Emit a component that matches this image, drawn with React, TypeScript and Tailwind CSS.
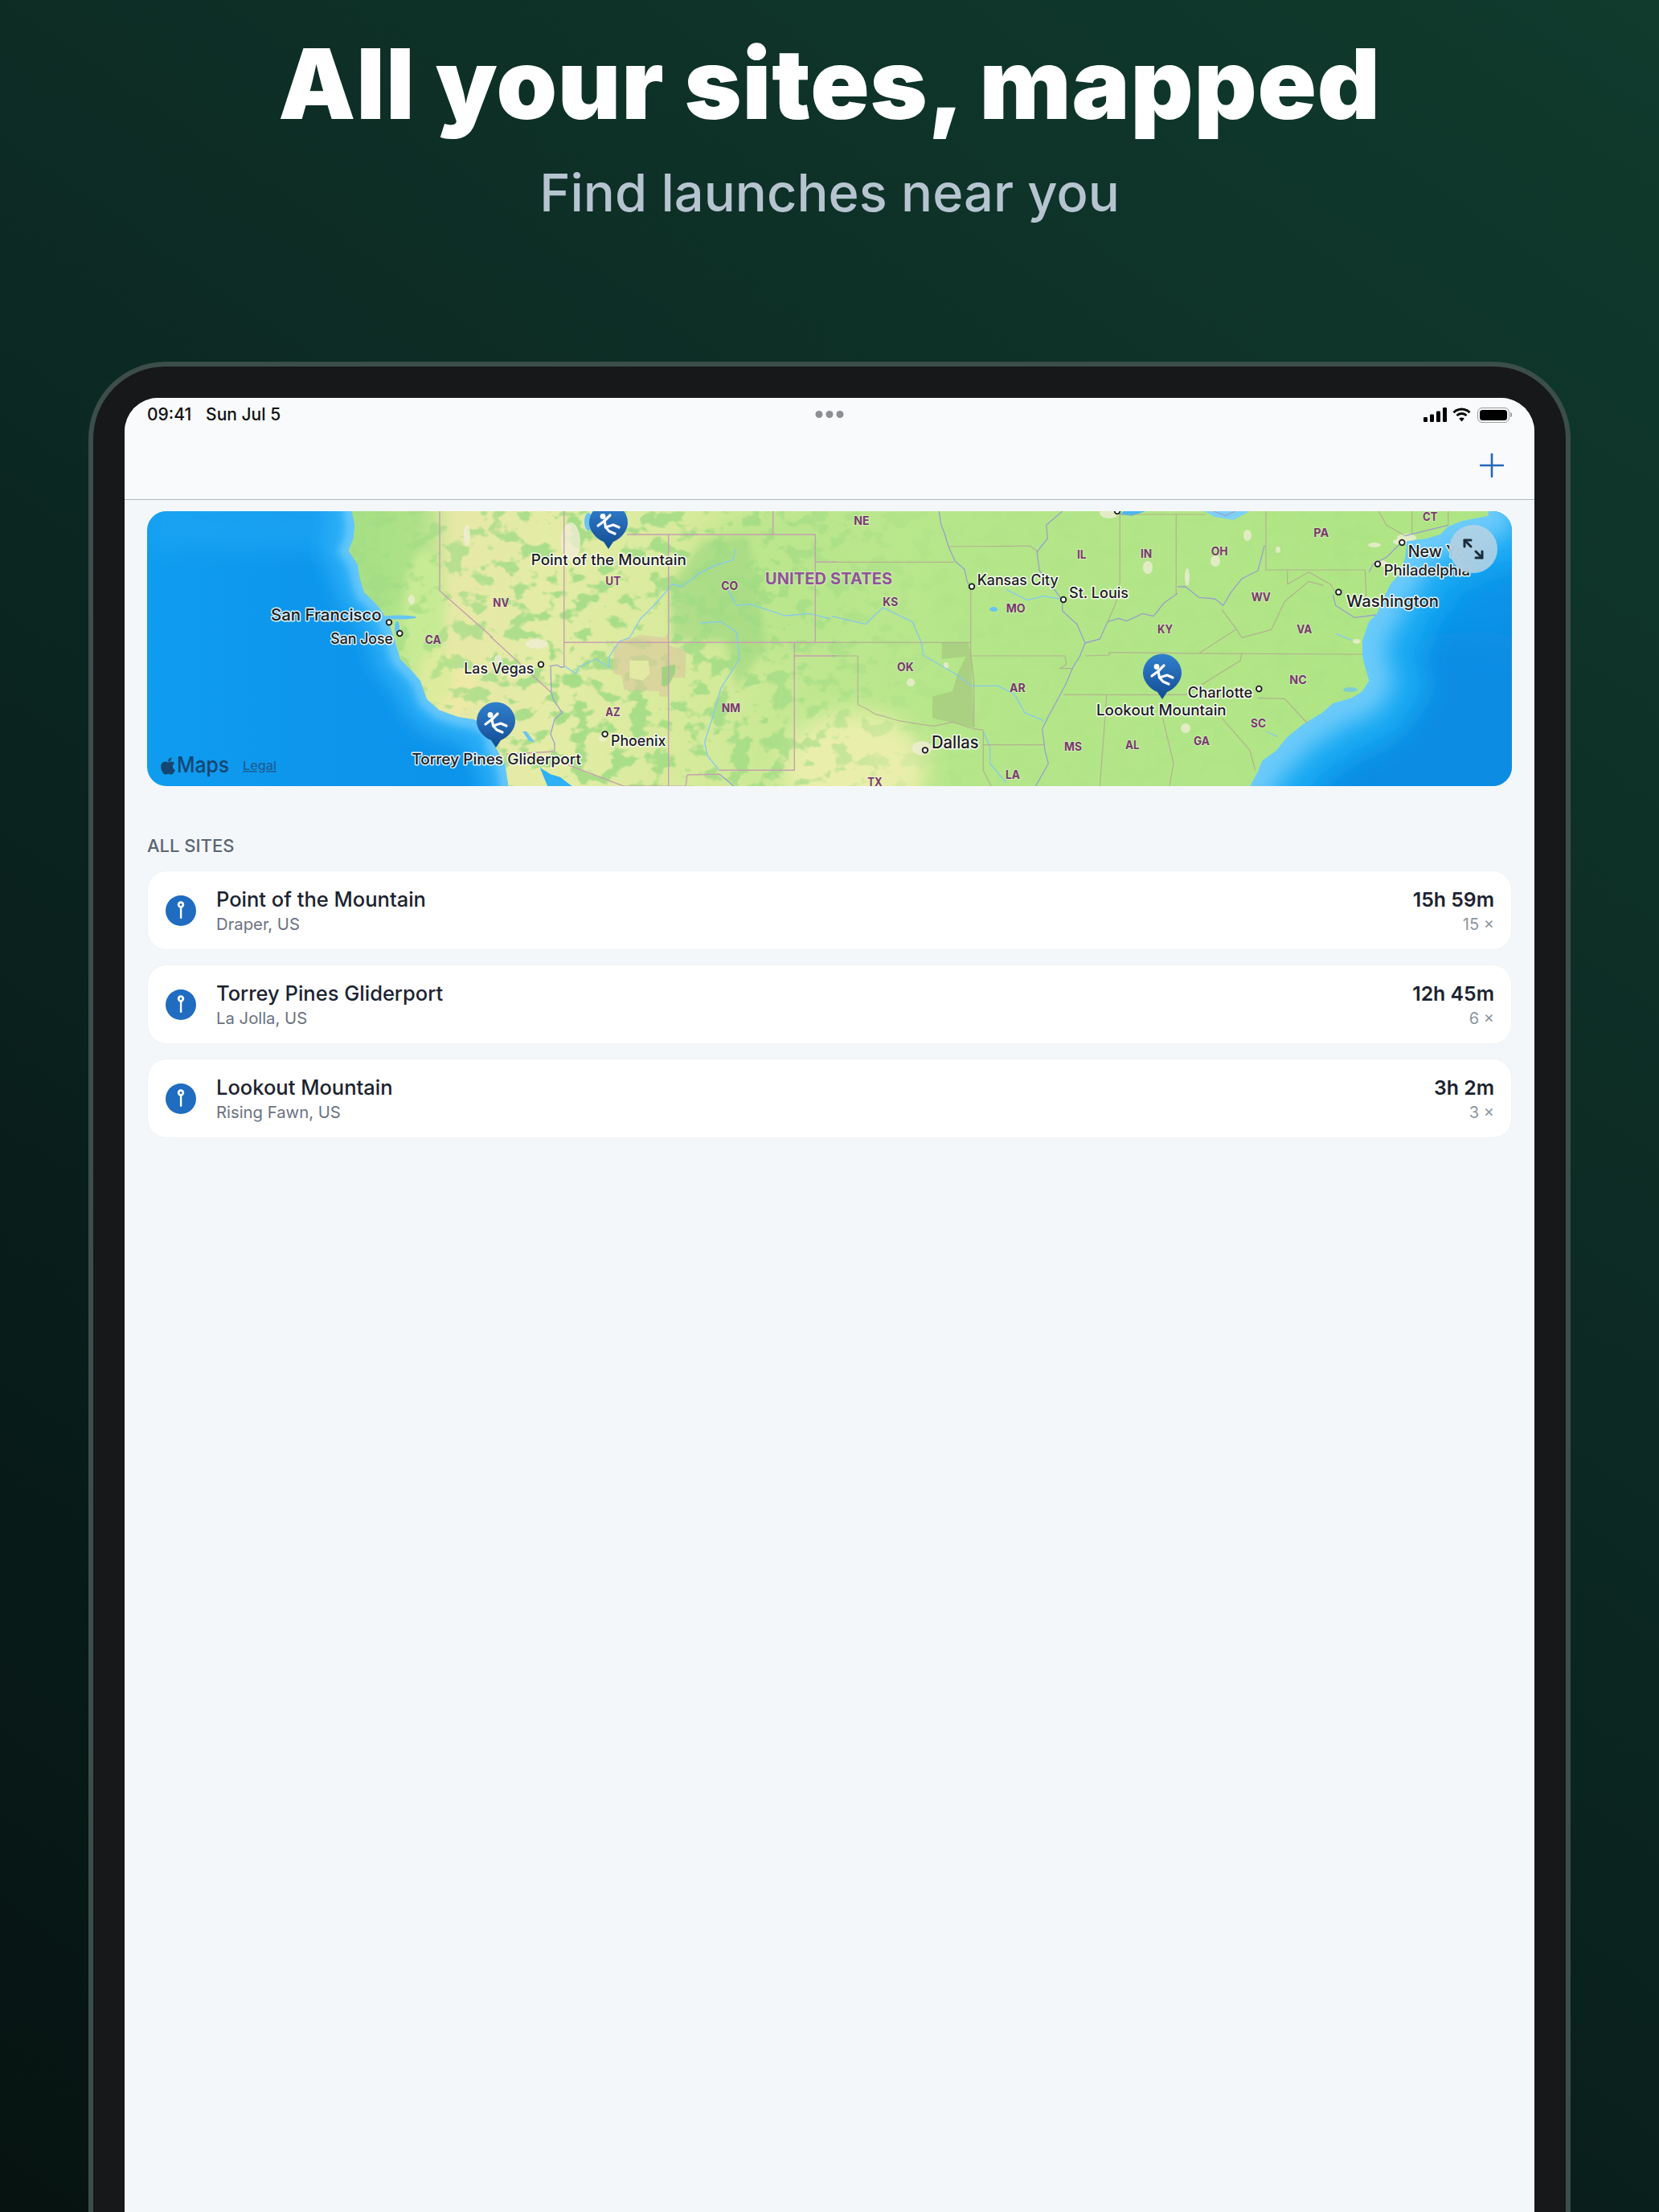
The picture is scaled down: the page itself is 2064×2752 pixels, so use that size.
const A = 0, B = 427, C = 852, D = 1272;

const line = (o: number, pts: number[]) => {
  let d = "";
  for (let i = 0; i < pts.length; i += 2) {
    d += (i === 0 ? "M" : "L") + (o + pts[i] / 3).toFixed(1) + " " + (pts[i + 1] / 3 - 6).toFixed(1) + " ";
  }
  return d;
};
const poly = (o: number, pts: number[]) => line(o, pts) + "Z";

const coast =
  line(A, [765, -20, 765, 18, 775, 70, 770, 120, 752, 165, 785, 215, 795, 270, 810, 320, 860, 370, 895, 420, 915, 470, 930, 520, 945, 570, 985, 610, 1020, 650, 1045, 720, 1090, 760, 1160, 785, 1220, 795, 1290, 830]) +
  line(B, [20, 900, 55, 960, 70, 1060, 70, 1075]).replace("M", "L") +
  line(D, [290, 1075, 300, 1045, 330, 990, 345, 950, 400, 910, 440, 860, 500, 812, 570, 770, 610, 735, 680, 715, 720, 690, 745, 650, 730, 600, 720, 560, 720, 500, 745, 430, 775, 400, 800, 340, 825, 290, 860, 250, 880, 190, 885, 130, 960, 120, 1010, 105, 1040, 75, 1090, 55, 1190, 35, 1190, -20]).replace("M", "L") +
  "Z";

const westBorders: [number, number[]][] = [
  [A, [1092, 18, 1092, 315, 1290, 490]],
  [B, [0, 485, 228, 695]],
  [B, [275, 18, 275, 600]],
  [B, [510, 105, 1213, 105, 1213, 508]],
  [B, [1055, 18, 1055, 105]],
  [B, [665, 105, 665, 1045]],
  [B, [275, 508, 1290, 508]],
  [B, [1213, 208, 1290, 208]],
  [B, [1135, 508, 1135, 985, 855, 985]],
  [B, [1135, 558, 1290, 558]],
  [B, [735, 1002, 855, 1000]],
  [B, [730, 1045, 735, 1002]],
  [B, [290, 965, 500, 1045, 730, 1045]],
  [B, [60, 925, 240, 915]],
];
const purpleBorders: [number, number[]][] = [
  [B, [275, 600, 262, 600, 250, 592, 225, 595, 228, 695, 235, 720, 268, 770, 240, 795, 225, 850, 240, 885, 240, 912]],
  [B, [855, 1000, 880, 1020, 910, 1045]],
  [C, [400, 18, 408, 70, 420, 100, 435, 150, 460, 205, 495, 235, 505, 280, 515, 300]],
  [C, [860, 18, 800, 70, 805, 120, 765, 170, 775, 240, 830, 310, 860, 350, 860, 390, 915, 440, 945, 510, 925, 560, 900, 600, 870, 670, 810, 780, 785, 830, 795, 910, 808, 960, 760, 1045]],
  [C, [945, 510, 1000, 495, 1030, 430, 1070, 418, 1100, 428, 1160, 400, 1200, 410, 1240, 360, 1290, 325]],
  [D, [30, 300, 60, 300, 110, 340, 170, 345, 200, 370, 230, 320, 270, 270, 330, 240, 355, 145]],
  [D, [165, 18, 210, 35, 245, 18]],
  [D, [610, 330, 620, 370, 690, 415, 770, 405]],
  [D, [880, 110, 1040, 70]],
  [D, [745, 245, 760, 215, 810, 190, 865, 135]],
];
const eastBorders: [number, number[]][] = [
  [C, [0, 508, 518, 508]],
  [C, [0, 208, 455, 208]],
  [C, [518, 300, 518, 555, 530, 650, 530, 825]],
  [C, [0, 558, 97, 558, 97, 740, 130, 755, 160, 775, 200, 785, 250, 800, 320, 812, 380, 820, 450, 805, 530, 830, 565, 835, 565, 985, 595, 1045]],
  [C, [565, 890, 790, 890]],
  [C, [520, 558, 870, 558, 875, 590, 850, 605, 900, 605]],
  [C, [435, 150, 740, 148, 770, 170]],
  [C, [1075, 18, 1075, 280, 1060, 360, 1030, 430]],
  [C, [1285, 30, 1285, 330]],
  [C, [1075, 30, 1285, 30]],
  [D, [25, 30, 135, 30]],
  [C, [1035, 545, 1035, 555, 945, 558]],
  [C, [1035, 545, 1290, 548]],
  [D, [30, 548, 720, 552]],
  [C, [865, 703, 1290, 703]],
  [D, [30, 703, 60, 703, 265, 575, 270, 548]],
  [D, [330, 715, 430, 718, 515, 810]],
  [D, [195, 790, 300, 910, 320, 985]],
  [C, [1025, 705, 1015, 850, 1000, 1045]],
  [C, [1235, 790, 1275, 960, 1260, 1045]],
  [D, [250, 458, 195, 385]],
  [D, [250, 458, 270, 490, 380, 460, 430, 355, 520, 280, 575, 295]],
  [D, [250, 458, 110, 548]],
  [D, [360, 18, 360, 237, 730, 237]],
  [D, [440, 240, 440, 290, 520, 245, 600, 290, 615, 315]],
  [D, [730, 237, 735, 340]],
  [D, [780, 18, 810, 70, 880, 110]],
  [D, [905, 18, 905, 105]],
  [D, [1040, 18, 1040, 70]],
];
const rivers: [number, number[]][] = [
  [B, [915, 160, 905, 200, 840, 220, 780, 250, 715, 300, 680, 290, 620, 360, 560, 420, 520, 490, 480, 505, 445, 560, 445, 600, 395, 570, 330, 600, 320, 625, 275, 595]],
  [B, [785, 435, 860, 430, 920, 470, 930, 570, 860, 680, 835, 770, 800, 880, 810, 930, 855, 985]],
  [B, [885, 310, 920, 370, 970, 365, 1100, 408, 1190, 400, 1270, 420]],
  [C, [0, 410, 125, 440, 190, 378, 300, 430, 335, 510, 340, 555, 460, 625, 520, 670, 620, 670, 680, 700, 720, 770, 790, 800]],
  [C, [650, 310, 730, 350, 790, 335, 850, 345]],
  [C, [565, 840, 590, 900, 590, 960, 650, 1030]],
  [D, [620, 475, 680, 500]],
  [D, [360, 840, 405, 860]],
];
const urban: [number, number, number, number][] = [
  [B + 100, 38, 12, 24],
  [C + 112, 295, 12, 9],
  [C + 345, 2, 12, 7],
  [C + 393, 70, 6, 8],
  [D + 57, 62, 6, 7],
  [D + 22, 82, 3, 11],
  [D + 97, 30, 5, 7],
  [D + 135, 48, 3, 4],
  [D + 255, 42, 8, 3],
  [D + 262, 65, 9, 4],
  [D + 288, 38, 10, 4],
  [D + 295, 33, 12, 5],
  [A + 329, 110, 4, 6],
  [A + 398, 30, 4, 13],
  [B + 58, 165, 14, 6],
  [B + 10, 185, 5, 6],
  [B + 140, 283, 5, 4],
  [C + 98, 213, 5, 5],
  [C + 142, 192, 3, 4],
  [D + 233, 162, 5, 3],
  [D + 20, 270, 6, 6],
];
const states: [string, number, number, number, number][] = [
  ["CA", A, 1037, 1097, 512],
  ["NV", B, 10, 70, 375],
  ["UT", B, 430, 487, 295],
  ["CO", B, 862, 925, 312],
  ["AZ", B, 430, 485, 782],
  ["NM", B, 863, 933, 768],
  ["KS", C, 190, 247, 372],
  ["NE", C, 82, 140, 68],
  ["OK", C, 243, 305, 615],
  ["MO", C, 650, 722, 397],
  ["IL", C, 915, 950, 195],
  ["IN", C, 1152, 1195, 192],
  ["KY", C, 1215, 1272, 473],
  ["AR", C, 663, 722, 692],
  ["MS", C, 867, 933, 912],
  ["AL", C, 1095, 1148, 906],
  ["LA", C, 648, 702, 1018],
  ["TX", C, 133, 188, 1045],
  ["OH", D, 155, 218, 183],
  ["PA", D, 538, 595, 115],
  ["WV", D, 305, 378, 355],
  ["VA", D, 475, 532, 475],
  ["NC", D, 448, 512, 662],
  ["SC", D, 303, 360, 825],
  ["GA", D, 90, 150, 890],
  ["CT", D, 945, 1000, 55],
];
const cities: [string, number, number, number, number, number][] = [
  ["San Francisco", A, 462, 875, 425, 20],
  ["San Jose", A, 685, 918, 512, 18],
  ["Las Vegas", A, 1183, 1444, 625, 18],
  ["Phoenix", B, 450, 655, 893, 18],
  ["Kansas City", C, 542, 845, 295, 18],
  ["St. Louis", C, 885, 1107, 343, 18],
  ["Dallas", C, 372, 548, 903, 21],
  ["Charlotte", D, 68, 310, 715, 18],
  ["New York", D, 890, 1160, 190, 20],
  ["Philadelphia", D, 800, 1122, 258, 18],
  ["Washington", D, 660, 1005, 375, 20],
  ["Point of the Mountain", B, 152, 732, 220, 18],
  ["Torrey Pines Gliderport", A, 988, 1620, 962, 18],
  ["Lookout Mountain", C, 987, 1472, 780, 18],
];
const dots: [number, number, number][] = [
  [A, 903, 433],
  [A, 943, 474],
  [B, 189, 590],
  [B, 428, 850],
  [C, 522, 299],
  [C, 864, 348],
  [C, 348, 910],
  [C, 1065, 18],
  [D, 868, 135],
  [D, 777, 215],
  [D, 631, 320],
  [D, 334, 681],
];

function MapPin({ tipX, tipY }: { tipX: number; tipY: number }) {
  return (
    <g transform={`translate(${tipX} ${tipY - 32})`}>
      <path d="M0 32 L-6 23 C-16 19 -24 9 -24 -0.5 A24 24 0 1 1 24 -0.5 C24 9 16 19 6 23 Z" fill="url(#pinFill)" />
      <g stroke="#ffffff" strokeWidth="3.2" strokeLinecap="round" strokeLinejoin="round" fill="none">
        <path d="M-5 -3 L2 -10" />
        <path d="M-5 -3 L-13 3" />
        <path d="M-5 -3 L-3.5 5 L6 2 L13 5" />
        <path d="M-3.5 5 L1 10 L8 13" />
      </g>
      <circle cx="-7" cy="-8.5" r="3.4" fill="#ffffff" />
    </g>
  );
}

function MapArt() {
  return (
    <svg viewBox="0 0 1698 342" className="block w-full h-full" fontFamily="Inter, 'Liberation Sans', sans-serif">
      <defs>
        <linearGradient id="oceanFill" x1="0" x2="1" y1="0" y2="0">
          <stop offset="0" stopColor="#0f9cef" />
          <stop offset="0.2" stopColor="#0c93ea" />
          <stop offset="0.8" stopColor="#02a0ef" />
          <stop offset="1" stopColor="#0d93e8" />
        </linearGradient>
        <linearGradient id="landFill" x1="0" x2="1698" y1="0" y2="0" gradientUnits="userSpaceOnUse">
          <stop offset="0.15" stopColor="#a9e187" />
          <stop offset="0.185" stopColor="#bfe890" />
          <stop offset="0.225" stopColor="#e6e9a6" />
          <stop offset="0.3" stopColor="#e3eca5" />
          <stop offset="0.41" stopColor="#d4ea9a" />
          <stop offset="0.5" stopColor="#bde78f" />
          <stop offset="0.6" stopColor="#b5e68a" />
          <stop offset="1" stopColor="#aee584" />
        </linearGradient>
        <linearGradient id="pinFill" x1="0" x2="0" y1="0" y2="1">
          <stop offset="0" stopColor="#2f80cd" />
          <stop offset="0.55" stopColor="#2263ae" />
          <stop offset="1" stopColor="#104c90" />
        </linearGradient>
        <linearGradient id="westFade" x1="0" x2="1698" y1="0" y2="0" gradientUnits="userSpaceOnUse">
          <stop offset="0.2" stopColor="#ffffff" stopOpacity="0.6" />
          <stop offset="0.3" stopColor="#ffffff" stopOpacity="0.9" />
          <stop offset="0.45" stopColor="#ffffff" stopOpacity="0.8" />
          <stop offset="0.58" stopColor="#ffffff" stopOpacity="0.1" />
          <stop offset="1" stopColor="#ffffff" stopOpacity="0.06" />
        </linearGradient>
        <mask id="westMask">
          <rect x="0" y="0" width="1698" height="342" fill="url(#westFade)" />
        </mask>
        <clipPath id="landClip">
          <path d={coast} />
        </clipPath>
        <filter id="blurS" x="-20%" y="-20%" width="140%" height="140%">
          <feGaussianBlur stdDeviation="5" />
        </filter>
        <filter id="blurM" x="-20%" y="-20%" width="140%" height="140%">
          <feGaussianBlur stdDeviation="14" />
        </filter>
        <filter id="blurL" x="-20%" y="-20%" width="140%" height="140%">
          <feGaussianBlur stdDeviation="22" />
        </filter>
        <filter id="mottle" x="0" y="0" width="100%" height="100%" colorInterpolationFilters="sRGB">
          <feTurbulence type="fractalNoise" baseFrequency="0.04 0.05" numOctaves="3" seed="11" />
          <feColorMatrix values="0 0 0 0 0.63  0 0 0 0 0.86  0 0 0 0 0.52  9 0 0 0 -4.75" />
          <feGaussianBlur stdDeviation="0.7" />
        </filter>
      </defs>

      <rect x="0" y="0" width="1698" height="342" fill="url(#oceanFill)" />
      <rect x="0" y="-30" width="300" height="80" fill="#22a8f5" opacity="0.55" filter="url(#blurM)" />
      <ellipse cx="1650" cy="340" rx="210" ry="190" fill="#0c8be2" opacity="0.8" filter="url(#blurL)" />

      <svg x="0" y="0" width="700" height="342">
        <path d={coast} fill="none" stroke="#2fb1f8" strokeWidth="60" filter="url(#blurM)" />
        <path d={coast} fill="none" stroke="#64c6fb" strokeWidth="22" filter="url(#blurS)" />
      </svg>
      <svg x="1200" y="0" width="498" height="342" viewBox="1200 0 498 342">
        <path d={coast} fill="none" stroke="#18a8f3" strokeWidth="140" filter="url(#blurM)" />
        <path d={coast} fill="none" stroke="#6ccbfa" strokeWidth="60" filter="url(#blurM)" />
      </svg>

      <path d={coast} fill="url(#landFill)" />

      <g clipPath="url(#landClip)">
        <ellipse cx="300" cy="20" rx="60" ry="110" fill="#a4de84" opacity="0.7" filter="url(#blurM)" />
        <ellipse cx="345" cy="120" rx="25" ry="70" fill="#c7eb94" filter="url(#blurS)" />
        <ellipse cx="380" cy="215" rx="30" ry="40" fill="#eeeaa6" opacity="0.8" filter="url(#blurS)" />
        <ellipse cx="360" cy="205" rx="20" ry="35" fill="#dcec9c" filter="url(#blurS)" />
        <ellipse cx="880" cy="320" rx="90" ry="70" fill="#e9efaa" filter="url(#blurM)" />
        <ellipse cx="780" cy="90" rx="110" ry="90" fill="#b7e58b" opacity="0.7" filter="url(#blurM)" />
        <path d={poly(B, [670, 300, 800, 130, 960, 110, 1000, 300, 1030, 520, 920, 680, 880, 500, 680, 500])} fill="#a3d983" opacity="0.7" filter="url(#blurS)" />
        <rect x="255" y="-2" width="1443" height="346" filter="url(#mottle)" mask="url(#westMask)" />
        <path d={poly(B, [460, 530, 480, 505, 560, 480, 650, 490, 665, 470, 665, 520, 730, 535, 728, 640, 665, 640, 665, 710, 630, 710, 630, 690, 500, 685, 490, 630, 460, 625])} fill="#d9cc9c" opacity="0.7" />
        <path d={poly(B, [520, 575, 590, 575, 595, 625, 570, 650, 520, 640])} fill="#e5eda6" opacity="0.85" />
        <path d={poly(B, [640, 600, 690, 590, 690, 620, 665, 670, 640, 670])} fill="#94cf7c" opacity="0.8" />
        <path d={poly(C, [375, 710, 450, 690, 470, 620, 500, 560, 410, 570, 410, 510, 510, 510, 520, 555, 530, 825, 375, 790])} fill="#a4c67c" opacity="0.65" />
        {urban.map(([x, y, rx, ry], i) => (
          <ellipse key={i} cx={x} cy={y} rx={rx} ry={ry} fill="#f1eed8" opacity="0.75" />
        ))}
        <g fill="#67c5f4">
          <ellipse cx={B + 122} cy="13" rx="5" ry="11" />
          <path d={poly(B, [120, 840, 135, 840, 165, 880, 145, 875])} />
          <path d={poly(B, [185, 975, 225, 1000, 260, 1010, 310, 1048, 215, 1048])} fill="#2eb0f5" />
          <ellipse cx="313" cy="132" rx="22" ry="2.5" />
          <ellipse cx="311" cy="145" rx="3" ry="8" />
          <path d={poly(C, [1075, 30, 1090, 18, 1170, 18, 1120, 35])} fill="#46b6f6" />
          <path d={poly(D, [130, 18, 300, 18, 240, 50, 170, 40])} fill="#7ed0f6" />
          <ellipse cx={C + 201} cy="122" rx="5" ry="3" />
          <ellipse cx={D + 225} cy="222" rx="9" ry="3" opacity="0.7" />
        </g>
      </g>

      <g fill="none" strokeLinejoin="round">
        {rivers.map(([o, p], i) => (
          <path key={i} d={line(o, p)} stroke="#86c9ec" strokeWidth="1.3" />
        ))}
        {westBorders.map(([o, p], i) => (
          <path key={i} d={line(o, p)} stroke="#c6a0ae" strokeWidth="1.4" />
        ))}
        {eastBorders.map(([o, p], i) => (
          <path key={i} d={line(o, p)} stroke="#b3a592" strokeOpacity="0.8" strokeWidth="1.2" />
        ))}
        {purpleBorders.map(([o, p], i) => (
          <path key={i} d={line(o, p)} stroke="#98a0cc" strokeWidth="1.3" />
        ))}
      </g>

      {dots.map(([o, x, y], i) => (
        <circle key={i} cx={o + x / 3} cy={y / 3 - 6} r="3.3" fill="#ffffff" stroke="#1c1c1e" strokeWidth="1.8" />
      ))}

      <g fill="#7a3a6c" fontSize="14.5" fontWeight="700" stroke="#ffffff" strokeOpacity="0.35" strokeWidth="2" style={{ paintOrder: "stroke" }}>
        {states.map(([t, o, x1, x2, y]) => (
          <text key={t} x={o + x1 / 3} y={y / 3 - 6} textLength={(x2 - x1) / 3} lengthAdjust="spacingAndGlyphs">
            {t}
          </text>
        ))}
      </g>
      <text x="769" y="91" fontSize="20" fontWeight="700" fill="#8f5497" textLength="158" lengthAdjust="spacing" stroke="#ffffff" strokeOpacity="0.35" strokeWidth="2" style={{ paintOrder: "stroke" }}>
        UNITED STATES
      </text>

      <MapPin tipX={574} tipY={47} />
      <MapPin tipX={434} tipY={294} />
      <MapPin tipX={1263} tipY={234} />

      <g fill="#1c1c1e" fontWeight="500" stroke="#ffffff" strokeOpacity="0.85" strokeWidth="3" strokeLinejoin="round" style={{ paintOrder: "stroke" }}>
        {cities.map(([t, o, x1, x2, y, s]) => (
          <text key={t} x={o + x1 / 3} y={y / 3 - 6} fontSize={s} textLength={(x2 - x1) / 3} lengthAdjust="spacingAndGlyphs">
            {t}
          </text>
        ))}
      </g>

      <svg x="17" y="305" width="18" height="24" viewBox="0 0 384 512">
        <path
          fill="#14466f"
          d="M318.7 268.7c-.2-36.7 16.4-64.4 50-84.8-18.8-26.9-47.2-41.7-84.7-44.6-35.5-2.8-74.3 20.7-88.5 20.7-15 0-49.4-19.7-76.4-19.7C63.3 141.2 4 184.8 4 273.5q0 39.3 14.4 81.2c12.8 36.7 59 126.7 107.2 125.2 25.2-.6 43-17.9 75.8-17.9 31.8 0 48.3 17.9 76.4 17.9 48.6-.7 90.4-82.5 102.6-119.3-65.2-30.7-61.7-90-61.7-91.9zm-56.6-164.2c27.3-32.4 24.8-61.9 24-72.5-24.1 1.4-52 16.4-67.9 34.9-17.5 19.8-27.8 44.3-25.6 71.9 26.1 2 49.9-11.4 69.5-34.3z"
        />
      </svg>
      <text x="37" y="325" fontSize="27" fontWeight="500" fill="#14466f" textLength="65" lengthAdjust="spacingAndGlyphs">
        Maps
      </text>
      <text x="119" y="322" fontSize="15" fontWeight="500" fill="#1a5f96" textDecoration="underline" textLength="42" lengthAdjust="spacingAndGlyphs">
        Legal
      </text>
    </svg>
  );
}

function SitePinIcon() {
  return (
    <svg width="38" height="38" viewBox="0 0 38 38" className="shrink-0">
      <circle cx="19" cy="19" r="19" fill="#1f6cc0" />
      <rect x="17.9" y="12" width="2.4" height="17" rx="1.2" fill="#ffffff" />
      <circle cx="19" cy="11.5" r="4.2" fill="#ffffff" />
      <circle cx="19" cy="11.5" r="1.5" fill="#1f6cc0" />
    </svg>
  );
}

const sites = [
  { name: "Point of the Mountain", place: "Draper, US", time: "15h 59m", count: "15 ×" },
  { name: "Torrey Pines Gliderport", place: "La Jolla, US", time: "12h 45m", count: "6 ×" },
  { name: "Lookout Mountain", place: "Rising Fawn, US", time: "3h 2m", count: "3 ×" },
];

export default function App() {
  return (
    <div className="w-[2064px] h-[2752px] overflow-hidden flex flex-col items-center bg-[linear-gradient(215deg,#103b2d_0%,#0d2d25_34%,#091f1c_66%,#061311_100%)] font-['Inter','Liberation_Sans',sans-serif]">
      <h1 className="mt-[31px] text-[121px] leading-[146px] font-black text-white tracking-[0.85px] whitespace-nowrap">
        All your sites, mapped
      </h1>
      <p className="mt-[23px] text-[65px] leading-[80px] font-medium text-[#b6c4d0] whitespace-nowrap">Find launches near you</p>

      <div className="mt-[170px] w-[1844px] h-[2400px] shrink-0 rounded-[96px] border-[6px] border-[#3c4e49] bg-[#17181a] p-[39px]">
        <div className="h-full rounded-[42px] overflow-hidden bg-[#f4f7fa] flex flex-col">
          <div className="h-[127px] shrink-0 bg-[#f8fafc] border-b border-[#b4b9bd] flex flex-col">
            <div className="h-[40px] mt-[1px] px-[28px] flex items-center relative text-[21px] font-medium text-[#111111]">
              <span>09:41</span>
              <span className="ml-[18px]">Sun Jul 5</span>
              <div className="absolute left-1/2 -translate-x-1/2 top-[15px] flex gap-[4px]">
                <span className="w-[9px] h-[9px] rounded-full bg-[#8e8e93]" />
                <span className="w-[9px] h-[9px] rounded-full bg-[#8e8e93]" />
                <span className="w-[9px] h-[9px] rounded-full bg-[#8e8e93]" />
              </div>
              <div className="ml-auto flex items-center gap-[7px]">
                <svg width="29" height="18" viewBox="0 0 29 18">
                  <rect x="0" y="12" width="5" height="6" rx="1.2" fill="#000" />
                  <rect x="8" y="8.5" width="5" height="9.5" rx="1.2" fill="#000" />
                  <rect x="16" y="4.5" width="5" height="13.5" rx="1.2" fill="#000" />
                  <rect x="24" y="0" width="5" height="18" rx="1.2" fill="#000" />
                </svg>
                <svg width="23" height="18" viewBox="0 0 23 18" fill="none" stroke="#000" strokeWidth="3">
                  <path d="M1.5 6.2 A14 14 0 0 1 21.5 6.2" />
                  <path d="M5.5 10 A8.5 8.5 0 0 1 17.5 10" />
                  <path d="M11.5 17.5 L8.2 13.8 A4.6 4.6 0 0 1 14.8 13.8 Z" fill="#000" stroke="none" />
                </svg>
                <div className="flex items-center ml-[1px]">
                  <div className="w-[40px] h-[19px] rounded-[6px] border border-[#9a9a9a] p-[2px]">
                    <div className="w-full h-full rounded-[3.5px] bg-black" />
                  </div>
                  <div className="ml-[1px] w-[2px] h-[6px] rounded-r-full bg-[#9a9a9a]" />
                </div>
              </div>
            </div>
            <div className="flex-1 flex justify-end items-center pr-[38px]">
              <svg width="30" height="30" viewBox="0 0 30 30" stroke="#2269bb" strokeWidth="2.6" strokeLinecap="round">
                <path d="M15 1 V29" />
                <path d="M1 15 H29" />
              </svg>
            </div>
          </div>

          <div className="px-[28px]">
            <div className="mt-[14px] h-[342px] rounded-[24px] overflow-hidden relative">
              <MapArt />
              <div className="absolute top-[17px] right-[18px] w-[60px] h-[60px] rounded-full bg-[#b9d3e4]/85 backdrop-blur-md flex items-center justify-center">
                <svg width="30" height="30" viewBox="-15 -15 30 30" fill="none" stroke="#1c2b3a" strokeWidth="3" strokeLinecap="round" strokeLinejoin="round">
                  <path d="M-11 -3 V-11 H-3" />
                  <path d="M-11 -11 L-3 -3" />
                  <path d="M11 3 V11 H3" />
                  <path d="M11 11 L3 3" />
                </svg>
              </div>
            </div>

            <div className="mt-[60px] text-[22px] leading-[28px] font-[550] text-[#5b6673]">ALL SITES</div>

            <div className="mt-[17px] flex flex-col gap-[18px]">
              {sites.map((s) => (
                <div key={s.name} className="h-[99px] rounded-[24px] bg-white border border-[#f0f3f6] pl-[22px] pr-[21px] flex items-center">
                  <SitePinIcon />
                  <div className="ml-[25px] flex flex-col">
                    <span className="text-[25.5px] leading-[32px] font-[550] text-[#1b2330]">{s.name}</span>
                    <span className="mt-[2px] text-[20.3px] leading-[26px] text-[#6b7280]">{s.place}</span>
                  </div>
                  <div className="ml-auto flex flex-col items-end">
                    <span className="text-[24.8px] leading-[32px] font-semibold text-[#1b2330]">{s.time}</span>
                    <span className="mt-[2px] text-[20px] leading-[26px] text-[#8d95a0]">{s.count}</span>
                  </div>
                </div>
              ))}
            </div>
          </div>
        </div>
      </div>
    </div>
  );
}
